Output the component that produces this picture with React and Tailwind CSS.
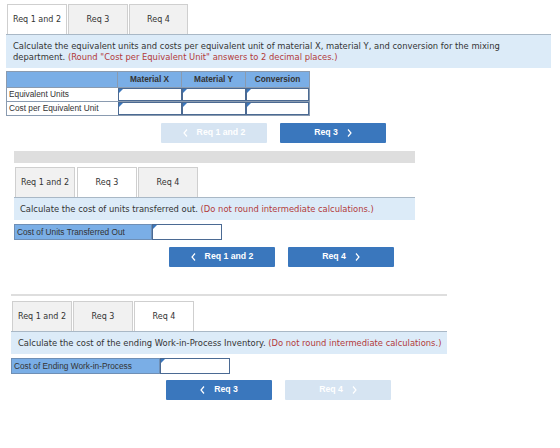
const verdana = { fontFamily: '"DejaVu Sans", Verdana, sans-serif' };
const arial = { fontFamily: '"Liberation Sans", Arial, sans-serif' };

function Tabs({ active, widths, gaps }) {
  const names = ['Req 1 and 2', 'Req 3', 'Req 4'];
  return (
    <div className="flex items-end">
      {names.map((n, i) => (
        <div
          key={n}
          style={{ ...verdana, width: widths[i], marginLeft: gaps[i] }}
          className={`h-[30px] flex items-center justify-center text-[8px] text-[#333] border border-b-0 border-[#cfcfcf] ${
            active === i ? 'bg-white' : 'bg-[#f1f1f1]'
          }`}
        >
          {n}
        </div>
      ))}
    </div>
  );
}

function Chevron({ dir }) {
  return (
    <svg width="5" height="8" viewBox="0 0 5 8" className="shrink-0">
      <polyline
        points={dir === 'left' ? '4,0.5 1,4 4,7.5' : '1,0.5 4,4 1,7.5'}
        fill="none"
        stroke="currentColor"
        strokeWidth="1.2"
      />
    </svg>
  );
}

function NavButton({ label, dir, disabled }) {
  return (
    <div
      style={arial}
      className={`w-[106px] h-[20px] flex items-center justify-center gap-[9px] text-[8.7px] font-bold rounded-[1px] ${
        disabled ? 'bg-[#d6e4f2] text-white' : 'bg-[#3a77bd] text-white'
      }`}
    >
      {dir === 'left' && <Chevron dir="left" />}
      <span>{label}</span>
      {dir === 'right' && <Chevron dir="right" />}
    </div>
  );
}

function InputCell({ w }) {
  return (
    <div className="relative h-full bg-white border border-[#4b6a93]" style={{ width: w }}>
      <div className="absolute left-0 top-0 w-0 h-0 border-t-[4px] border-t-[#3a77bd] border-r-[4px] border-r-transparent" />
    </div>
  );
}

export default function App() {
  return (
    <div className="w-[560px] h-[448px] bg-white overflow-hidden relative">
      {/* Section 1 */}
      <div className="ml-[6px] w-[545px] pt-[4px]">
        <Tabs active={0} widths={[60, 60, 59]} gaps={[1, 1, 1]} />
        <div
          style={verdana}
          className="h-[34px] bg-[#dcebf8] border-t border-[#a9b8c6] px-[7px] pt-[6px] text-[8.4px] leading-[11px] text-[#333] whitespace-nowrap"
        >
          Calculate the equivalent units and costs per equivalent unit of material X, material Y, and conversion for the mixing
          <br />
          department. <span className="text-[#b23a3a]">(Round "Cost per Equivalent Unit" answers to 2 decimal places.)</span>
        </div>
        <div style={arial} className="mt-[3px] w-[304px] border border-[#8a9bb0] text-[8.3px] text-[#333]">
          <div className="flex h-[15px] bg-[#7aaee6] font-bold">
            <div className="w-[111px] border-r border-[#8a9bb0]" />
            <div className="w-[64px] flex items-center justify-center border-r border-[#8a9bb0]">Material X</div>
            <div className="w-[64px] flex items-center justify-center border-r border-[#8a9bb0]">Material Y</div>
            <div className="w-[63px] flex items-center justify-center">Conversion</div>
          </div>
          {['Equivalent Units', 'Cost per Equivalent Unit'].map((r) => (
            <div key={r} className="flex h-[14px] border-t border-[#8a9bb0]">
              <div className="w-[111px] pl-[2px] flex items-center">{r}</div>
              <InputCell w={64} />
              <InputCell w={64} />
              <InputCell w={63} />
            </div>
          ))}
        </div>
        <div className="flex gap-[13px] ml-[155px] mt-[7px]">
          <NavButton label="Req 1 and 2" dir="left" disabled />
          <NavButton label="Req 3" dir="right" />
        </div>
      </div>

      {/* Section 2 */}
      <div className="ml-[14px] w-[401px] mt-[8px]">
        <div className="h-[12px] bg-[#dedede]" />
        <div className="pt-[4px]">
          <Tabs active={1} widths={[60, 60, 60]} gaps={[1, 2, 1]} />
        </div>
        <div
          style={verdana}
          className="h-[23px] bg-[#dcebf8] border-t border-[#a9b8c6] px-[6px] flex items-center text-[8.4px] text-[#333]"
        >
          <span>
            Calculate the cost of units transferred out.{' '}
            <span className="text-[#b23a3a]">(Do not round intermediate calculations.)</span>
          </span>
        </div>
        <div style={arial} className="mt-[4px] flex h-[16px] text-[8.3px] text-[#333]">
          <div className="w-[138px] bg-[#7aaee6] border border-[#6f8fb5] flex items-center pl-[2px]">
            Cost of Units Transferred Out
          </div>
          <InputCell w={70} />
        </div>
        <div className="flex gap-[13px] ml-[155px] mt-[7px]">
          <NavButton label="Req 1 and 2" dir="left" />
          <NavButton label="Req 4" dir="right" />
        </div>
      </div>

      {/* Section 3 */}
      <div className="ml-[11px] w-[436px] mt-[27px]">
        <div className="h-[2px] bg-[#dedede]" />
        <div className="pt-[5px]">
          <Tabs active={2} widths={[60, 60, 60]} gaps={[1, 1, 1]} />
        </div>
        <div
          style={verdana}
          className="h-[23px] bg-[#dcebf8] border-t border-[#a9b8c6] px-[7px] flex items-center text-[8.4px] text-[#333] whitespace-nowrap"
        >
          <span>
            Calculate the cost of the ending Work-in-Process Inventory.{' '}
            <span className="text-[#b23a3a]">(Do not round intermediate calculations.)</span>
          </span>
        </div>
        <div style={arial} className="mt-[4px] flex h-[16px] text-[8.3px] text-[#333]">
          <div className="w-[149px] bg-[#7aaee6] border border-[#6f8fb5] flex items-center pl-[2px]">
            Cost of Ending Work-in-Process
          </div>
          <InputCell w={70} />
        </div>
        <div className="flex gap-[13px] ml-[155px] mt-[6px]">
          <NavButton label="Req 3" dir="left" />
          <NavButton label="Req 4" dir="right" disabled />
        </div>
      </div>
    </div>
  );
}
